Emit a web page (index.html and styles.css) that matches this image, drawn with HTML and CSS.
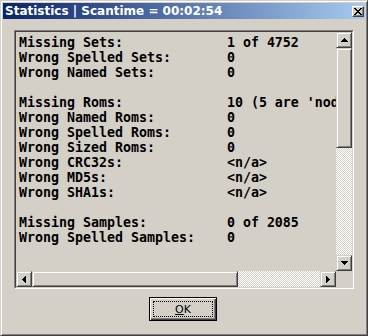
FILE: index.html
```html
<!DOCTYPE html>
<html lang="en">

<head>
    <meta charset="UTF-8">
    <title>Statistics</title>
    <link rel="stylesheet" href="styles.css">
</head>

<body>
    <div class="window">
        <!-- title bar -->
        <div class="titlebar">
            <span class="title">Statistics | Scantime = 00:02:54</span>
            <div class="close-btn">
                <svg width="8" height="7" viewBox="0 0 8 7" shape-rendering="crispEdges">
                    <path d="M0 0h2v1h1v1h2V1h1V0h2v1H7v1H6v1H5v1h1v1h1v1h1v1H6V6H5V5H3v1H2v1H0V6h1V5h1V4h1V3H2V2H1V1H0z" fill="#000" />
                </svg>
            </div>
        </div>

        <div class="client">
            <div class="listbox">
                <div class="listbox-inner">
                    <div class="text-area">
<pre class="stats">Missing Sets:             1 of 4752
Wrong Spelled Sets:       0
Wrong Named Sets:         0

Missing Roms:             10 (5 are 'nodump')
Wrong Named Roms:         0
Wrong Spelled Roms:       0
Wrong Sized Roms:         0
Wrong CRC32s:             &lt;n/a&gt;
Wrong MD5s:               &lt;n/a&gt;
Wrong SHA1s:              &lt;n/a&gt;

Missing Samples:          0 of 2085
Wrong Spelled Samples:    0</pre>
                    </div>

                    <div class="vscroll">
                        <div class="sbtn">
                            <svg width="7" height="4" viewBox="0 0 7 4" shape-rendering="crispEdges"><path d="M3 0h1v1h1v1h1v1h1v1H0V3h1V2h1V1h1z" /></svg>
                        </div>
                        <div class="sbtn vthumb"></div>
                        <div class="track"></div>
                        <div class="sbtn">
                            <svg width="7" height="4" viewBox="0 0 7 4" shape-rendering="crispEdges"><path d="M0 0h7v1H6v1H5v1H4v1H3V3H2V2H1V1H0z" /></svg>
                        </div>
                    </div>

                    <div class="hscroll">
                        <div class="sbtn">
                            <svg width="4" height="7" viewBox="0 0 4 7" shape-rendering="crispEdges"><path d="M3 0h1v7H3V6H2V5H1V4H0V3h1V2h1V1h1z" /></svg>
                        </div>
                        <div class="sbtn hthumb"></div>
                        <div class="track"></div>
                        <div class="sbtn">
                            <svg width="4" height="7" viewBox="0 0 4 7" shape-rendering="crispEdges"><path d="M0 0h1v1h1v1h1v1h1v1H3v1H2v1H1v1H0z" /></svg>
                        </div>
                    </div>

                    <div class="corner"></div>
                </div>
            </div>
        </div>

        <div class="footer">
            <button class="ok-btn"><span class="focus"><u>O</u>K</span></button>
        </div>
    </div>
</body>

</html>
```

FILE: styles.css
```css
body {
    margin: 0;
    background-color: #d4d0c8;
}

/* window frame */
.window {
    width: 368px;
    height: 336px;
    box-sizing: border-box;
    background-color: #d4d0c8;
    border: 1px solid;
    border-color: #d4d0c8 #404040 #404040 #d4d0c8;
    box-shadow: inset 1px 1px #fff, inset -1px -1px #808080;
    padding: 2px;
}

.titlebar {
    height: 16px;
    display: flex;
    align-items: center;
    justify-content: space-between;
    padding: 0 1px 0 2px;
    background: linear-gradient(to right, #0a246a, #a6caf0);
}

.title {
    font-family: "DejaVu Sans", sans-serif;
    font-size: 12px;
    font-weight: bold;
    color: #fff;
    white-space: nowrap;
}

.close-btn {
    width: 12px;
    height: 11px;
    box-sizing: border-box;
    background-color: #d4d0c8;
    border: 1px solid;
    border-color: #fff #404040 #404040 #fff;
    box-shadow: inset -1px -1px #808080;
    display: flex;
    align-items: center;
    justify-content: center;
}

.client {
    padding: 11px 0 0 11px;
}

/* sunken list box */
.listbox {
    width: 340px;
    height: 259px;
    box-sizing: border-box;
    border: 1px solid;
    border-color: #808080 #fff #fff #808080;
}

.listbox-inner {
    height: 100%;
    box-sizing: border-box;
    border: 1px solid;
    border-color: #404040 #d4d0c8 #d4d0c8 #404040;
    display: grid;
    grid-template-columns: 1fr 16px;
    grid-template-rows: 1fr 16px;
}

.text-area {
    overflow: hidden;
    padding: 3px 0 0 3px;
}

.stats {
    margin: 0;
    font-family: "DejaVu Sans Mono", monospace;
    font-weight: bold;
    font-size: 13.29px;
    line-height: 15px;
    color: #000;
    white-space: pre;
}

/* scroll bars */
.vscroll {
    display: flex;
    flex-direction: column;
}

.hscroll {
    display: flex;
}

.sbtn {
    width: 16px;
    height: 16px;
    flex: none;
    box-sizing: border-box;
    background-color: #d4d0c8;
    border: 1px solid;
    border-color: #d4d0c8 #404040 #404040 #d4d0c8;
    box-shadow: inset 1px 1px #fff, inset -1px -1px #808080;
    display: flex;
    align-items: center;
    justify-content: center;
}

.sbtn svg {
    fill: #000;
}

.vthumb {
    height: 100px;
}

.hthumb {
    width: 206px;
}

.track {
    flex: 1;
    background: repeating-conic-gradient(#fff 0 25%, #d4d0c8 0 50%) 0 0 / 2px 2px;
}

.corner {
    background-color: #d4d0c8;
}

.footer {
    display: flex;
    justify-content: center;
    padding: 8px 2px 0 0;
}

.ok-btn {
    width: 68px;
    height: 24px;
    padding: 3px;
    box-sizing: border-box;
    background-color: #d4d0c8;
    border: 1px solid #000;
    box-shadow: inset 1px 1px #fff, inset -1px -1px #404040, inset -2px -2px #808080;
    font-family: "DejaVu Sans", sans-serif;
    font-size: 11px;
    color: #000;
    display: flex;
}

.focus {
    flex: 1;
    display: flex;
    align-items: center;
    justify-content: center;
    outline: 1px dotted #000;
    outline-offset: -1px;
}
```
